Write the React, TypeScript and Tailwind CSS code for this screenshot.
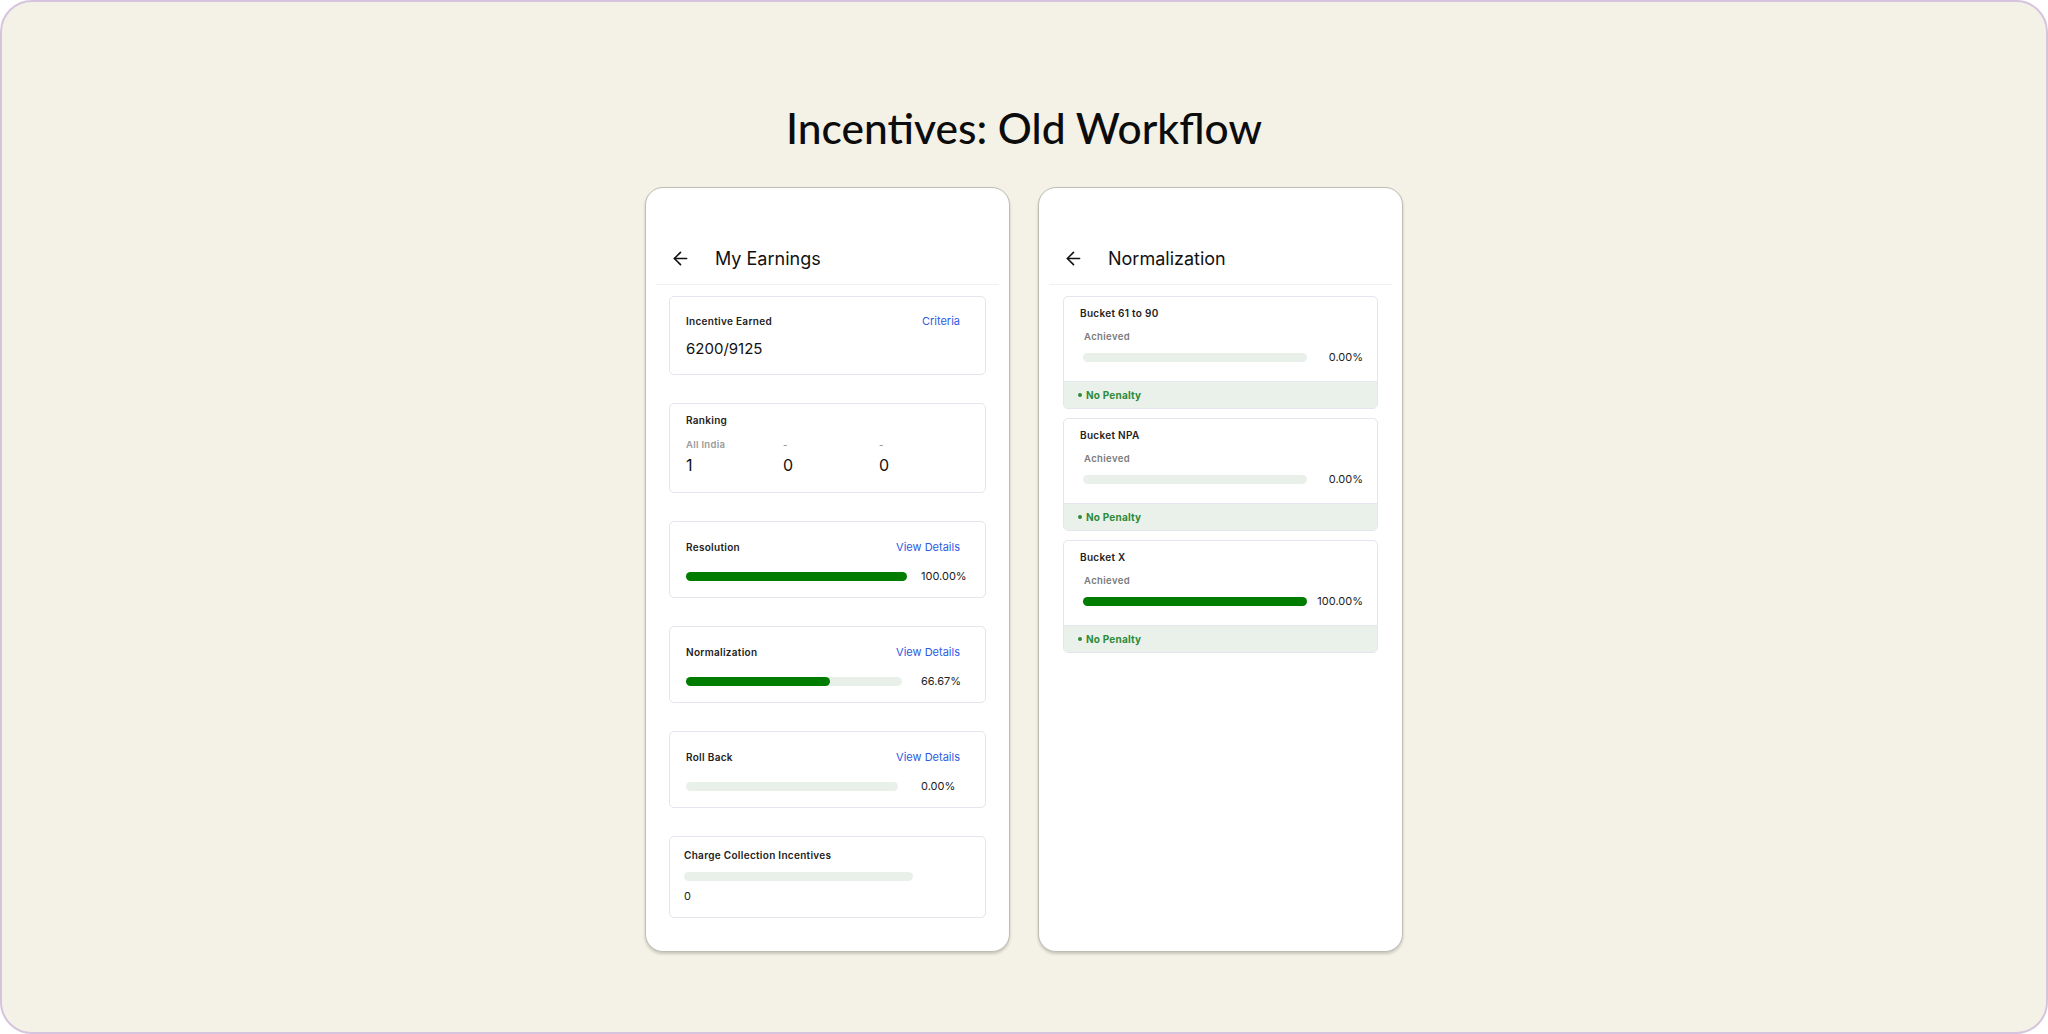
import React from 'react';
import { ArrowLeft } from 'lucide-react';

const font = { fontFamily: 'Inter, "Noto Sans", sans-serif' };

const Header: React.FC<{ title: string }> = ({ title }) => (
  <div>
    <div className="mt-[56px] flex h-[28px] items-center pl-[24px]">
      <ArrowLeft size={21} strokeWidth={1.8} className="text-[#111]" />
      <span className="ml-[24px] text-[18px] text-[#111]">{title}</span>
    </div>
    <div className="mx-[10px] mt-[12px] h-px bg-[#f1f1f1]" />
  </div>
);

const Bar: React.FC<{ width: number; pct: number }> = ({ width, pct }) => (
  <div className="h-[9px] rounded-full bg-[#e9f0ea]" style={{ width }}>
    <div className="h-full rounded-full bg-[#007d00]" style={{ width: `${pct}%` }} />
  </div>
);

const Card: React.FC<{ className?: string; children: React.ReactNode }> = ({ className, children }) => (
  <div className={`rounded-[5px] border border-[#e4e6ee] bg-white ${className ?? ''}`}>{children}</div>
);

const Label: React.FC<{ children: React.ReactNode; className?: string }> = ({ children, className }) => (
  <div className={`text-[10px] font-semibold leading-[14px] tracking-[0.03em] text-[#222] ${className ?? ''}`}>{children}</div>
);

const ProgressCard: React.FC<{ title: string; barW: number; pct: number; value: string }> = ({ title, barW, pct, value }) => (
  <Card className="h-[77px] pl-[16px] pr-[25px] pt-[18px]">
    <div className="flex items-center justify-between">
      <Label>{title}</Label>
      <span className="text-[11px] leading-[14px] text-[#2d5be3]">View Details</span>
    </div>
    <div className="mt-[14px] flex items-center">
      <Bar width={barW} pct={pct} />
      <span className="ml-auto w-[39px] text-[11px] text-[#222]">{value}</span>
    </div>
  </Card>
);

const MyEarnings = () => (
  <div className="flex flex-col gap-[28px] px-[23px] pt-[11px]">
    <Card className="h-[79px] pl-[16px] pr-[25px] pt-[17px]">
      <div className="flex items-center justify-between">
        <Label>Incentive Earned</Label>
        <span className="text-[11px] leading-[14px] text-[#2d5be3]">Criteria</span>
      </div>
      <div className="mt-[11px] text-[15px] leading-[20px] text-[#111]">6200/9125</div>
    </Card>
    <Card className="h-[90px] pl-[16px] pt-[9px]">
      <Label>Ranking</Label>
      <div className="mt-[12px] grid grid-cols-[97px_96px_96px]">
        {[
          ['All India', '1'],
          ['-', '0'],
          ['-', '0'],
        ].map(([k, v], i) => (
          <div key={i}>
            <div className="text-[9.5px] font-semibold leading-[12px] tracking-[0.03em] text-[#9a9a9a]">{k}</div>
            <div className="mt-[4px] text-[16px] leading-[20px] text-[#111]">{v}</div>
          </div>
        ))}
      </div>
    </Card>
    <ProgressCard title="Resolution" barW={221} pct={100} value="100.00%" />
    <ProgressCard title="Normalization" barW={216} pct={66.67} value="66.67%" />
    <ProgressCard title="Roll Back" barW={212} pct={0} value="0.00%" />
    <Card className="h-[82px] pl-[14px] pt-[11px]">
      <Label>Charge Collection Incentives</Label>
      <div className="mt-[10px]">
        <Bar width={229} pct={0} />
      </div>
      <div className="mt-[8px] text-[11px] leading-[14px] text-[#222]">0</div>
    </Card>
  </div>
);

const Bucket: React.FC<{ title: string; pct: number; value: string }> = ({ title, pct, value }) => (
  <div className="h-[113px] overflow-hidden rounded-[5px] border border-[#e4e6ee] bg-white">
    <div className="h-[84px] pl-[16px] pr-[14px] pt-[9px]">
      <Label>{title}</Label>
      <div className="ml-[4px] mt-[11px] text-[9.5px] font-semibold leading-[12px] tracking-[0.04em] text-[#7a7a7a]">Achieved</div>
      <div className="ml-[3px] mt-[6px] flex items-center justify-between">
        <Bar width={224} pct={pct} />
        <span className="text-[11px] text-[#222]">{value}</span>
      </div>
    </div>
    <div className="flex h-[27px] items-center border-t border-[#e4e8ee] bg-[#eaf1ea] pl-[14px] text-[10px] font-bold tracking-[0.02em] text-[#2e8b3a]">
      <span className="mr-[4px] inline-block h-[4px] w-[4px] rounded-full bg-[#2e8b3a]" />
      No Penalty
    </div>
  </div>
);

const NormalizationScreen = () => (
  <div className="flex flex-col gap-[9px] px-[24px] pt-[11px]">
    <Bucket title="Bucket 61 to 90" pct={0} value="0.00%" />
    <Bucket title="Bucket NPA" pct={0} value="0.00%" />
    <Bucket title="Bucket X" pct={100} value="100.00%" />
  </div>
);

const Phone: React.FC<{ children: React.ReactNode }> = ({ children }) => (
  <div className="h-[765px] w-[365px] rounded-[18px] border border-[#bdbdb2] bg-white shadow-[0_2px_3px_rgba(0,0,0,0.18)]">
    {children}
  </div>
);

export default function App() {
  return (
    <div
      className="flex h-[1034px] w-[2048px] flex-col items-center rounded-[32px] border-2 border-[#d6c4de] bg-[#f4f2e6]"
      style={font}
    >
      <h1
        className="mt-[101px] text-[42.5px] font-medium leading-[50px] text-[#0c0c0c]"
        style={{ fontFamily: 'Lato, "Open Sans", sans-serif' }}
      >
        Incentives: Old Workflow
      </h1>
      <div className="mt-[34px] flex gap-[28px]">
        <Phone>
          <Header title="My Earnings" />
          <MyEarnings />
        </Phone>
        <Phone>
          <Header title="Normalization" />
          <NormalizationScreen />
        </Phone>
      </div>
    </div>
  );
}
